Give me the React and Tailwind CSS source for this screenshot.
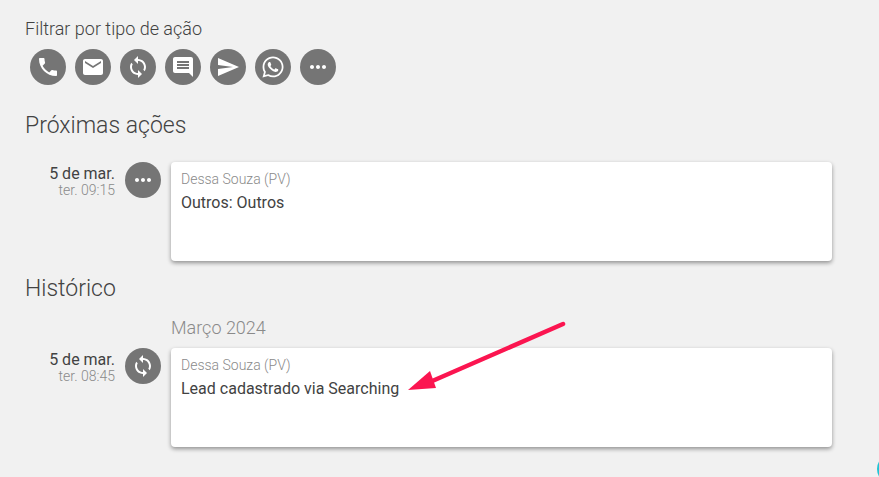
import React from 'react';
import { MdPhone, MdEmail, MdSync, MdComment, MdSend, MdMoreHoriz } from 'react-icons/md';
import { FaWhatsapp } from 'react-icons/fa';

const filters = [MdPhone, MdEmail, MdSync, MdComment, MdSend, FaWhatsapp, MdMoreHoriz];

const Circle = ({ icon: Icon, size = 24 }) => (
  <div className="w-9 h-9 rounded-full bg-[#757575] flex items-center justify-center text-white shrink-0">
    <Icon size={size} />
  </div>
);

const Action = ({ date, time, icon, author, text }) => (
  <div className="flex items-start">
    <div className="w-[90px] text-right pt-[2px]">
      <div className="text-[16px] leading-[19px] text-[#424242]">{date}</div>
      <div className="text-[14px] leading-[15px] font-light text-[#8a8a8a]">{time}</div>
    </div>
    <div className="ml-[10px]">
      <Circle icon={icon} />
    </div>
    <div className="ml-[10px] w-[661px] h-[99px] bg-white rounded-[4px] shadow-[0_2px_4px_rgba(0,0,0,0.4)] px-[10px] pt-[9px]">
      <div className="text-[14px] leading-[16px] font-light text-[#8a8a8a]">{author}</div>
      <div className="mt-[6px] text-[16px] leading-[19px] text-[#424242]">{text}</div>
    </div>
  </div>
);

export default function App() {
  return (
    <div
      className="relative w-[879px] h-[477px] overflow-hidden bg-[#f1f1f1] pl-[25px] pt-[19px]"
      style={{ fontFamily: 'Roboto, sans-serif' }}
    >
      <div className="text-[18px] leading-[20px] font-light text-[#424242]">Filtrar por tipo de ação</div>
      <div className="flex gap-[9px] ml-[5px] mt-[10px]">
        {filters.map((Icon, i) => (
          <Circle key={i} icon={Icon} />
        ))}
      </div>

      <h2 className="mt-[27px] text-[23px] leading-[28px] font-light text-[#424242]">Próximas ações</h2>
      <div className="mt-[22px]">
        <Action date="5 de mar." time="ter. 09:15" icon={MdMoreHoriz} author="Dessa Souza (PV)" text="Outros: Outros" />
      </div>

      <h2 className="mt-[14px] text-[23px] leading-[28px] font-light text-[#424242]">Histórico</h2>
      <div className="mt-[14px] ml-[146px] text-[18px] leading-[22px] font-light text-[#8a8a8a]">Março 2024</div>
      <div className="mt-[9px]">
        <Action date="5 de mar." time="ter. 08:45" icon={MdSync} author="Dessa Souza (PV)" text="Lead cadastrado via Searching" />
      </div>

      {/* annotation arrow */}
      <svg className="absolute left-0 top-0 pointer-events-none" width="879" height="477">
        <line x1="563" y1="324" x2="430" y2="382" stroke="#fb1550" strokeWidth="4.5" strokeLinecap="round" />
        <polygon points="408,390 430,371 436,388" fill="#fb1550" />
      </svg>

      {/* edge of the floating button */}
      <div className="absolute left-[877px] top-[454px] w-[30px] h-[30px] rounded-full bg-[#1fc4d4]" />
    </div>
  );
}
